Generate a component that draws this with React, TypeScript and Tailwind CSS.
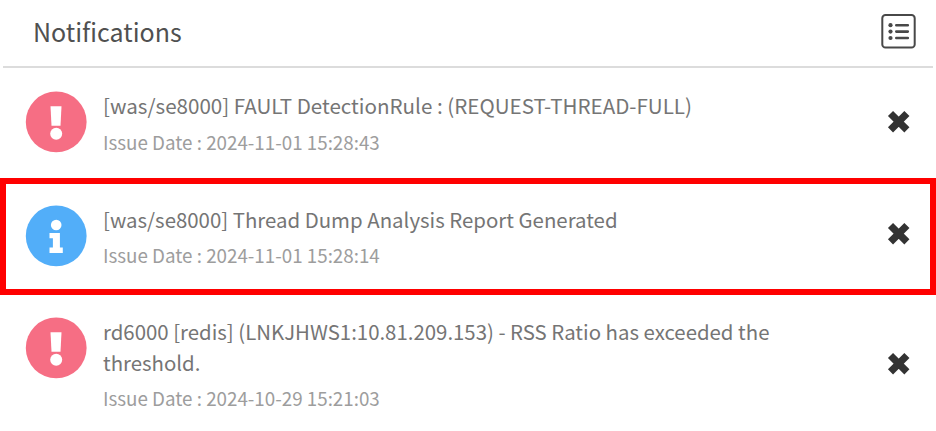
type Kind = 'fault' | 'info';

interface Notice {
  kind: Kind;
  lines: string[];
  date: string;
  row: string;
  title: string;
  dateGap: string;
  close: string;
}

const notices: Notice[] = [
  {
    kind: 'fault',
    lines: ['[was/se8000] FAULT DetectionRule : (REQUEST-THREAD-FULL)'],
    date: '2024-11-01 15:28:43',
    row: 'h-[110px] px-[25px] pt-[21px]',
    title: 'text-[20.58px]',
    dateGap: 'mt-[7px]',
    close: 'mt-[21px]',
  },
  {
    kind: 'info',
    lines: ['[was/se8000] Thread Dump Analysis Report Generated'],
    date: '2024-11-01 15:28:14',
    row: 'h-[117px] border-[6px] border-[#ff0000] px-[19px] pt-[19px]',
    title: 'text-[20.42px]',
    dateGap: 'mt-[6px]',
    close: 'mt-[19px]',
  },
  {
    kind: 'fault',
    lines: ['rd6000 [redis] (LNKJHWS1:10.81.209.153) - RSS Ratio has exceeded the', 'threshold.'],
    date: '2024-10-29 15:21:03',
    row: 'h-[136px] px-[25px] pt-[20px]',
    title: 'text-[20.4px]',
    dateGap: 'mt-[6px]',
    close: 'mt-[37px]',
  },
];

function KindIcon({ kind }: { kind: Kind }) {
  return (
    <svg className="mt-[2px] h-[62px] w-[62px] shrink-0" viewBox="0 0 62 62">
      <circle cx="31.2" cy="30.9" r="30.4" fill={kind === 'fault' ? '#f66e84' : '#52aef9'} />
      {kind === 'fault' ? (
        <g fill="#fff">
          <path d="M25.5 15.3h11l-1 19.4h-9z" />
          <circle cx="31.2" cy="42.7" r="6" />
        </g>
      ) : (
        <g fill="#fff">
          <circle cx="31.2" cy="20" r="5.3" />
          <path d="M24.5 28h10.4v14.5h2.9v5.5H24.5v-5.5h3.4v-9.2h-3.4z" />
        </g>
      )}
    </svg>
  );
}

function CloseIcon({ className }: { className: string }) {
  return (
    <button aria-label="Close" className={`h-6 w-6 shrink-0 ${className}`}>
      <svg className="h-6 w-6" viewBox="0 0 24 24">
        <path d="M3.5 3.5 19.9 19.9M19.9 3.5 3.5 19.9" stroke="#333" strokeWidth="7.2" />
      </svg>
    </button>
  );
}

function ListIcon() {
  return (
    <svg className="h-9 w-9" viewBox="0 0 36 36" fill="none" stroke="#484848">
      <rect x="2.3" y="2" width="32.4" height="32.6" rx="3.2" strokeWidth="2" />
      <path d="M16.3 12.2h11.5M16.3 18.6h11.5M16.3 25h11.5" strokeWidth="2.6" strokeLinecap="round" />
      <g fill="#484848" stroke="none">
        <circle cx="10.5" cy="12.2" r="2.1" />
        <circle cx="10.5" cy="18.6" r="2.1" />
        <circle cx="10.5" cy="25" r="2.1" />
      </g>
    </svg>
  );
}

export default function App() {
  return (
    <main className="h-[431px] w-[936px] overflow-hidden bg-white font-['Noto_Sans_CJK_KR',sans-serif]">
      <header className="mx-[3px] flex h-[68px] items-start justify-between border-b-2 border-[#dcdcdc] pr-[17px] pl-[30px]">
        <h1 className="mt-[13px] text-[25px] leading-[36px] text-[#505050]">Notifications</h1>
        <button aria-label="List" className="mt-[13px] h-9 w-9">
          <ListIcon />
        </button>
      </header>
      {notices.map((n) => (
        <article key={n.date} className={`flex items-start ${n.row}`}>
          <KindIcon kind={n.kind} />
          <div className="mt-px ml-4 flex-1 whitespace-nowrap">
            {n.lines.map((line) => (
              <p key={line} className={`leading-[31px] text-[#757575] ${n.title}`}>{line}</p>
            ))}
            <p className={`text-[18.8px] leading-[27px] text-[#9d9d9d] ${n.dateGap}`}>Issue Date : {n.date}</p>
          </div>
          <CloseIcon className={n.close} />
        </article>
      ))}
    </main>
  );
}
